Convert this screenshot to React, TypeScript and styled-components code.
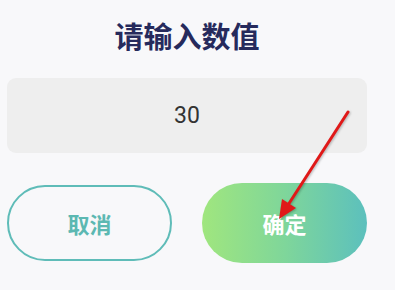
import React from "react";
import styled, { createGlobalStyle } from "styled-components";

const GlobalStyle = createGlobalStyle`
  html, body {
    margin: 0;
    padding: 0;
    background: #f8f8fa;
  }
  body {
    font-family: "Noto Sans CJK SC", "Noto Sans", sans-serif;
  }
`;

const App = () => {
  return (
    <Page>
      <GlobalStyle />
      <Dialog>
        <Title>请输入数值</Title>
        <ValueBox>30</ValueBox>
        <ButtonRow>
          <CancelButton>取消</CancelButton>
          <ConfirmButton>确定</ConfirmButton>
        </ButtonRow>
      </Dialog>
      <Arrow width="395" height="290" viewBox="0 0 395 290">
        <line
          x1="348"
          y1="112"
          x2="288"
          y2="205"
          stroke="#e01818"
          strokeWidth="3"
          strokeLinecap="round"
        />
        <polygon points="279,219 282,199 296,208" fill="#e01818" />
      </Arrow>
    </Page>
  );
};

const Page = styled.div`
  position: relative;
  width: 395px;
  height: 290px;
  overflow: hidden;
`;

const Dialog = styled.div`
  width: 360px;
  margin-left: 7px;
  padding-top: 15px;
  display: flex;
  flex-direction: column;
`;

const Title = styled.h1`
  margin: 0;
  text-align: center;
  font-family: "Noto Sans CJK SC", sans-serif;
  font-weight: 700;
  font-size: 29px;
  line-height: 40px;
  color: #262a5c;
`;

const ValueBox = styled.div`
  margin-top: 23px;
  height: 75px;
  border-radius: 9px;
  background: #eeeeee;
  display: flex;
  align-items: center;
  justify-content: center;
  font-family: Roboto, "Noto Sans", sans-serif;
  font-size: 23px;
  color: #333333;
`;

const ButtonRow = styled.div`
  margin-top: 30px;
  display: grid;
  grid-template-columns: 1fr 1fr;
  gap: 30px;
  align-items: center;
`;

const BaseButton = styled.button`
  border-radius: 40px;
  font-family: "Noto Sans CJK SC", sans-serif;
  font-weight: 700;
  font-size: 22px;
  padding: 0;
  display: flex;
  align-items: center;
  justify-content: center;
`;

const CancelButton = styled(BaseButton)`
  height: 76px;
  background: transparent;
  border: 2px solid #5fbcb8;
  color: #5cb8b2;
`;

const ConfirmButton = styled(BaseButton)`
  height: 80px;
  border: none;
  background: linear-gradient(90deg, #a0e67e 0%, #7fd69a 50%, #5cc0bd 100%);
  color: #ffffff;
`;

const Arrow = styled.svg`
  position: absolute;
  left: 0;
  top: 0;
  pointer-events: none;
  filter: drop-shadow(1px 1px 1px rgba(0, 0, 0, 0.25));
`;

export default App;
